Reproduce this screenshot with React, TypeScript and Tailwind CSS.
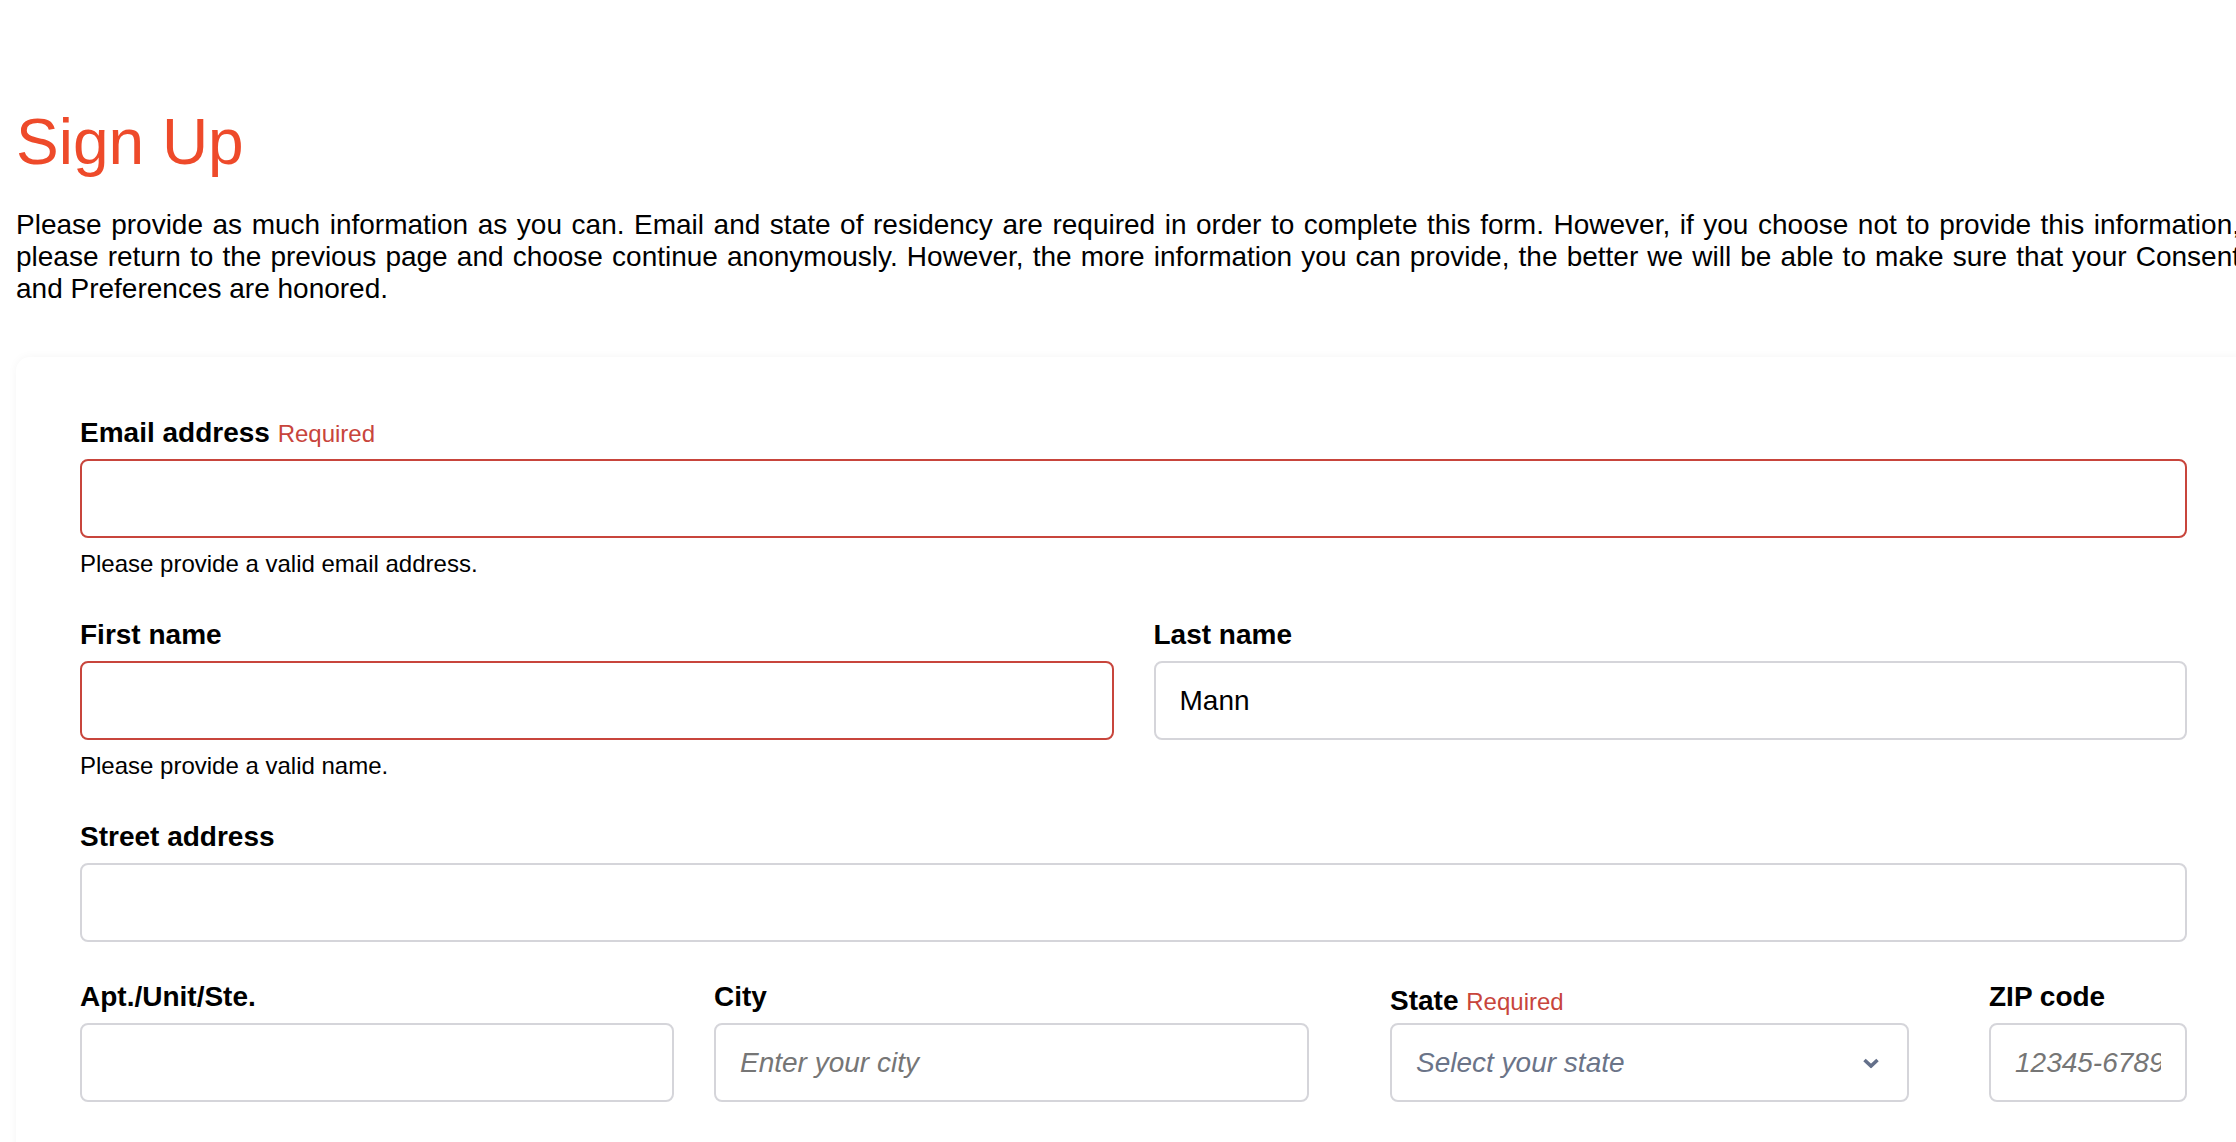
import React from 'react';

const FONT = "font-['Liberation_Sans',Arial,Helvetica,sans-serif]";

const inputBase =
  'block h-[79px] w-full rounded-[8px] border-2 bg-white px-[24px] text-[28px] text-black outline-none placeholder:italic placeholder:text-[#767676]';

function Label({ text, required, nudge }: { text: string; required?: boolean; nudge?: boolean }) {
  return (
    <label
      className={`block text-[28px] font-bold leading-[32px] text-black ${
        nudge ? 'mb-[6px] pt-[4px]' : 'mb-[10px]'
      }`}
    >
      {text}
      {required && (
        <>
          {' '}
          <span className="text-[24px] font-normal leading-[24px] text-[#c8453c]">Required</span>
        </>
      )}
    </label>
  );
}

function Helper({ children }: { children: React.ReactNode }) {
  return <p className="mt-[10px] text-[24px] leading-[32px] text-black">{children}</p>;
}

function TextField({
  label,
  required,
  invalid,
  helper,
  placeholder,
  value,
  className = '',
}: {
  label: string;
  required?: boolean;
  invalid?: boolean;
  helper?: string;
  placeholder?: string;
  value?: string;
  className?: string;
}) {
  return (
    <div className={className}>
      <Label text={label} required={required} />
      <input
        type="text"
        defaultValue={value}
        placeholder={placeholder}
        className={`${inputBase} ${invalid ? 'border-[#c8453c]' : 'border-[#d5d5da]'}`}
      />
      {helper && <Helper>{helper}</Helper>}
    </div>
  );
}

function StateSelect() {
  return (
    <div className="ml-[81px] w-[519px] shrink-0">
      {/* label sits a few px lower than its neighbours in the original */}
      <Label text="State" required nudge />
      <div className="relative">
        <select
          defaultValue=""
          className="block h-[79px] w-full appearance-none rounded-[8px] border-2 border-[#d5d5da] bg-white px-[24px] text-[28px] italic text-[#6b7488] outline-none"
        >
          <option value="" disabled>
            Select your state
          </option>
          <option value="CA">California</option>
          <option value="NY">New York</option>
          <option value="TX">Texas</option>
        </select>
        <svg
          className="pointer-events-none absolute right-[29px] top-1/2 -translate-y-1/2"
          width="18"
          height="11"
          viewBox="0 0 18 11"
          fill="none"
        >
          <path d="M2.5 2.5 L9 8.5 L15.5 2.5" stroke="#64708a" strokeWidth="3.6" strokeLinejoin="miter" />
        </svg>
      </div>
    </div>
  );
}

export default function App() {
  return (
    <div className={`w-full overflow-hidden bg-white ${FONT}`}>
      <div className="w-[2251px] pl-[16px] pt-[105px] pb-[80px]">
        <h1 className="text-[64px] font-normal leading-[74px] text-[#ee4a2a]">Sign Up</h1>
        <p className="mt-[30px] w-[2224px] text-justify text-[28px] leading-[32px] text-black">
          Please provide as much information as you can. Email and state of residency are required in order to
          complete this form. However, if you choose not to provide this information, please return to the previous
          page and choose continue anonymously. However, the more information you can provide, the better we will be
          able to make sure that your Consent and Preferences are honored.
        </p>

        <form className="mt-[52px] rounded-[14px] bg-white px-[64px] pt-[60px] pb-[64px] shadow-[0_0_10px_rgba(0,0,0,0.045)]">
          <div className="flex flex-col gap-[39px]">
            <TextField label="Email address" required invalid helper="Please provide a valid email address." />

            <div className="grid grid-cols-2 items-start gap-x-[40px]">
              <TextField label="First name" invalid helper="Please provide a valid name." />
              <TextField label="Last name" value="Mann" />
            </div>

            <TextField label="Street address" />

            <div className="flex items-start">
              <TextField label="Apt./Unit/Ste." className="w-[594px] shrink-0" />
              <TextField label="City" placeholder="Enter your city" className="ml-[40px] w-[595px] shrink-0" />
              <StateSelect />
              <TextField label="ZIP code" placeholder="12345-6789" className="ml-[80px] w-[198px] shrink-0" />
            </div>
          </div>
        </form>
      </div>
    </div>
  );
}
